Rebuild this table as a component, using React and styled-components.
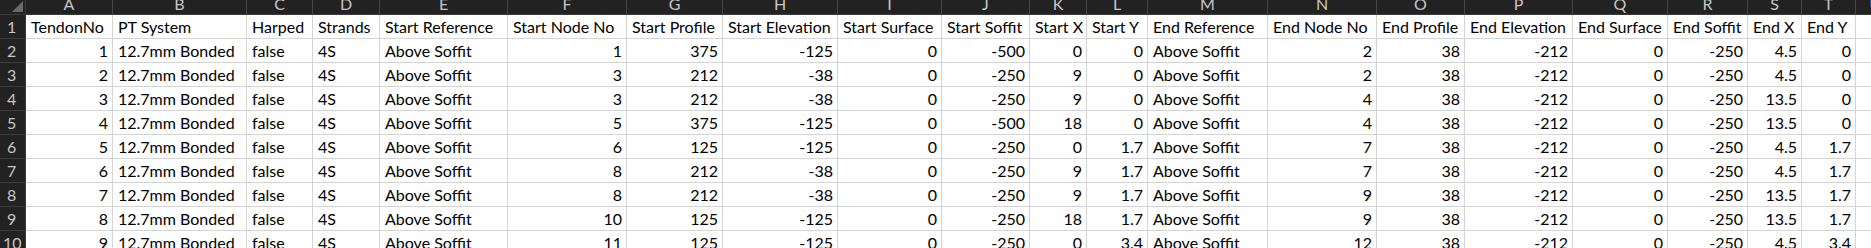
import styled, { createGlobalStyle } from 'styled-components'

const GlobalStyle = createGlobalStyle`
  html, body {
    margin: 0;
    padding: 0;
    background: #ffffff;
    overflow: hidden;
  }
`;

// column widths incl. gridline, row header first
const widths = [26, 87, 134, 66, 67, 128, 119, 96, 115, 104, 88, 57, 61, 120, 109, 88, 108, 95, 80, 54, 54, 40];
const letters = 'ABCDEFGHIJKLMNOPQRSTU'.split('');
const numeric = [true, false, false, false, false, true, true, true, true, true, true, true, false, true, true, true, true, true, true, true, false];

const heads = ['TendonNo', 'PT System', 'Harped', 'Strands', 'Start Reference', 'Start Node No', 'Start Profile', 'Start Elevation', 'Start Surface', 'Start Soffit', 'Start X', 'Start Y', 'End Reference', 'End Node No', 'End Profile', 'End Elevation', 'End Surface', 'End Soffit', 'End X', 'End Y', ''];

const raw = [
  [1, 1, 375, -125, -500, 0, 0, 2, 4.5, 0],
  [2, 3, 212, -38, -250, 9, 0, 2, 4.5, 0],
  [3, 3, 212, -38, -250, 9, 0, 4, 13.5, 0],
  [4, 5, 375, -125, -500, 18, 0, 4, 13.5, 0],
  [5, 6, 125, -125, -250, 0, 1.7, 7, 4.5, 1.7],
  [6, 8, 212, -38, -250, 9, 1.7, 7, 4.5, 1.7],
  [7, 8, 212, -38, -250, 9, 1.7, 9, 13.5, 1.7],
  [8, 10, 125, -125, -250, 18, 1.7, 9, 13.5, 1.7],
  [9, 11, 125, -125, -250, 0, 3.4, 12, 4.5, 3.4],
];

const rows = raw.map(([no, sn, sp, se, ss, sx, sy, en, ex, ey]) => [
  no, '12.7mm Bonded', 'false', '4S', 'Above Soffit', sn, sp, se, 0, ss, sx, sy,
  'Above Soffit', en, 38, -212, 0, -250, ex, ey, '',
]);

const Sheet = styled.div`
  display: grid;
  grid-template-columns: ${widths.map((w) => w + 'px').join(' ')};
  grid-auto-rows: 24px;
  grid-template-rows: 15px;
  font-family: Lato, "Open Sans", sans-serif;
  font-size: 16px;
  color: #000;
  width: 1871px;
  height: 248px;
  overflow: hidden;
`;

const Corner = styled.div`
  background: #222222;
  border-right: 1px solid #3c3c3c;
  border-bottom: 1px solid #3c3c3c;
  box-sizing: border-box;
  position: relative;
  overflow: hidden;
  &::after {
    content: '';
    position: absolute;
    right: 2px;
    bottom: 2px;
    width: 0;
    height: 0;
    border-left: 11px solid transparent;
    border-bottom: 11px solid #6a6a6a;
  }
`;

const ColHead = styled.div`
  background: #222222;
  color: #c6c6c6;
  border-right: 1px solid #454545;
  border-bottom: 1px solid #3c3c3c;
  box-sizing: border-box;
  text-align: center;
  overflow: hidden;
  line-height: 15px;
  font-size: 16px;
  & > span {
    display: block;
    margin-top: -4px;
  }
`;

const RowHead = styled.div`
  background: #222222;
  color: #c6c6c6;
  border-right: 1px solid #3c3c3c;
  border-bottom: 1px solid #3c3c3c;
  box-sizing: border-box;
  padding-left: ${(p) => (p.$wide ? '3px' : '7px')};
  line-height: 24px;
  font-size: 16px;
`;

const Cell = styled.div`
  background: #ffffff;
  border-right: 1px solid #d4d4d4;
  border-bottom: 1px solid #d4d4d4;
  box-sizing: border-box;
  padding: 0 4px 0 5px;
  line-height: 24px;
  white-space: nowrap;
  overflow: hidden;
  text-align: ${(p) => (p.$num ? 'right' : 'left')};
`;

export default function App() {
  return (
    <>
      <GlobalStyle />
      <Sheet>
        <Corner />
        {letters.map((l) => (
          <ColHead key={l}><span>{l}</span></ColHead>
        ))}
        <RowHead>1</RowHead>
        {heads.map((h, i) => (
          <Cell key={'h' + i}>{h}</Cell>
        ))}
        {rows.map((r, ri) => [
          <RowHead key={'r' + ri} $wide={ri + 2 >= 10}>{ri + 2}</RowHead>,
          ...r.map((v, ci) => (
            <Cell key={ri + '-' + ci} $num={numeric[ci]}>{v}</Cell>
          )),
        ])}
      </Sheet>
    </>
  );
}
